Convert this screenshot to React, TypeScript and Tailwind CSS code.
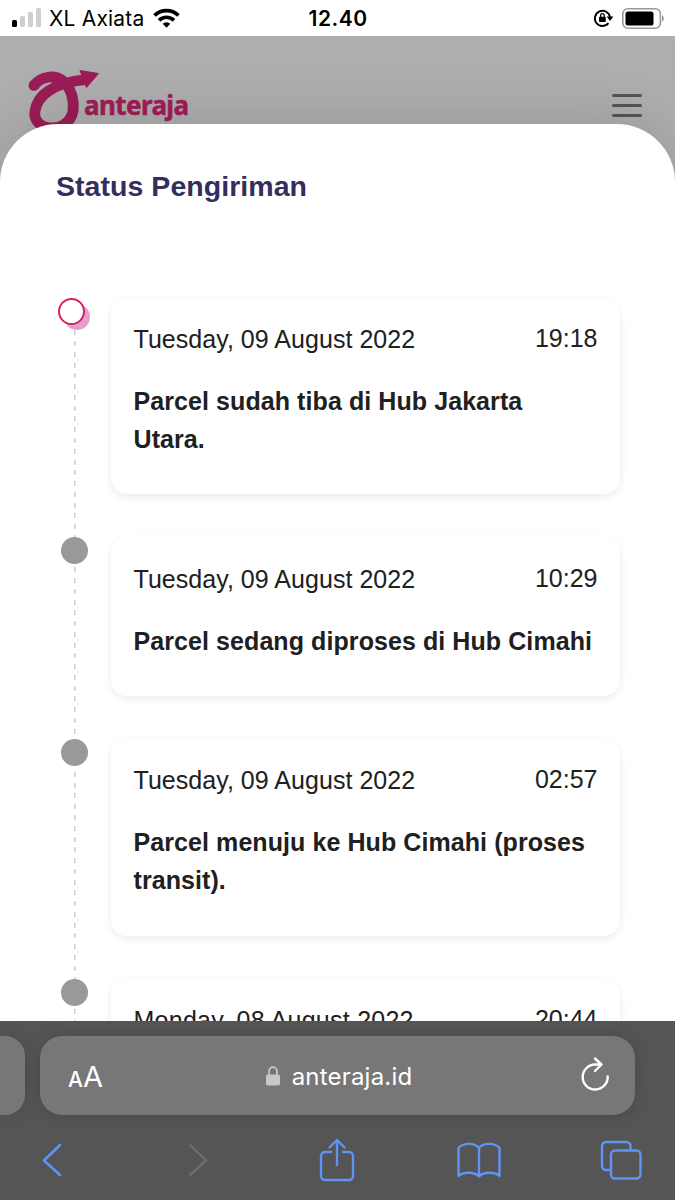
import type { ReactNode } from 'react';

type Status = {
    date: string;
    time: string;
    text: string;
    current?: boolean;
    dateClass?: string;
};

const history: Status[] = [
    {
        date: 'Tuesday, 09 August 2022',
        time: '19:18',
        text: 'Parcel sudah tiba di Hub Jakarta Utara.',
        current: true,
    },
    {
        date: 'Tuesday, 09 August 2022',
        time: '10:29',
        text: 'Parcel sedang diproses di Hub Cimahi',
    },
    {
        date: 'Tuesday, 09 August 2022',
        time: '02:57',
        text: 'Parcel menuju ke Hub Cimahi (proses transit).',
    },
    {
        date: 'Monday, 08 August 2022',
        time: '20:44',
        text: 'Parcel sudah diambil oleh SATRIA.',
        dateClass: 'tracking-[0.25px]',
    },
];

function StatusBar() {
    return (
        <div className="grid h-9 shrink-0 grid-cols-3 items-center bg-white pr-[10px] pl-[11px] font-['Inter','Liberation_Sans',sans-serif] text-black">
            <div className="flex items-center">
                <svg width="31" height="20" viewBox="0 0 31 20">
                    <rect x="1" y="12" width="5" height="7" rx="1.5" />
                    <g fill="#cfcfcf">
                        <rect x="9" y="8" width="5" height="11" rx="1.5" />
                        <rect x="17" y="4" width="5" height="15" rx="1.5" />
                        <rect x="25" y="0" width="5" height="19" rx="1.5" />
                    </g>
                </svg>
                <span className="mt-[2px] ml-[7px] text-[21px] leading-[34px] tracking-[0.2px] whitespace-nowrap">
                    XL Axiata
                </span>
                <svg
                    className="ml-2"
                    width="27"
                    height="20"
                    viewBox="0 0 28 20"
                    fill="none"
                    stroke="#000"
                    strokeWidth="3.8"
                >
                    <path d="M1.6 7.4a17.6 17.6 0 0 1 24.8 0" />
                    <path d="M6.2 12.4a11.2 11.2 0 0 1 15.6 0" />
                    <path d="M14 20l-4-4a5.8 5.8 0 0 1 8 0z" fill="#000" stroke="none" />
                </svg>
            </div>
            <span className="mt-[2px] text-center text-[21px] leading-[34px] font-semibold tracking-[0.5px]">
                12.40
            </span>
            <div className="flex items-center justify-end gap-2">
                <svg width="20" height="18" viewBox="0 0 20 18" fill="none">
                    <path
                        d="M14.4 14.2A7.6 7.6 0 1 1 16 8.2"
                        stroke="#000"
                        strokeWidth="1.9"
                    />
                    <path d="M12.6 7.6h6.8l-3.4 4.4z" fill="#000" />
                    <rect x="5" y="7.8" width="6.8" height="5.2" rx="0.8" fill="#000" />
                    <path d="M6.6 8.4V6.4a1.8 1.8 0 0 1 3.6 0v2" stroke="#000" strokeWidth="1.3" />
                </svg>
                <svg width="43" height="21" viewBox="0 0 43 21">
                    <rect
                        x="0.8"
                        y="0.8"
                        width="37.6"
                        height="19.4"
                        rx="5"
                        fill="none"
                        stroke="#999"
                        strokeWidth="1.6"
                    />
                    <rect x="3.5" y="3.5" width="28" height="14" rx="2.6" />
                    <path d="M40 7.2c2.4.9 2.4 5.7 0 6.6z" fill="#999" />
                </svg>
            </div>
        </div>
    );
}

function Logo() {
    return (
        <div className="flex">
            <svg width="72" height="66" viewBox="0 0 72 66" fill="none" stroke="#9b1c56">
                <path
                    d="M6 16.500C13 7 27 5.500 35 12C43 19 46.500 31 45 42C43 53 34 59 24 59C12 59 5.500 51 7 42C9 27 24 14 58 10.500"
                    strokeWidth="10.8"
                    strokeLinejoin="round"
                />
                <circle cx="6" cy="16.400" r="5.4" fill="#9b1c56" stroke="none" />
                <path d="M52 1.500l18.500 3L58.500 18.500z" fill="#9b1c56" strokeLinejoin="round" />
            </svg>
            <span className="mt-[21px] -ml-4 font-['Noto_Sans','Liberation_Sans',sans-serif] text-[26px] leading-[30px] font-bold tracking-[-0.6px] text-[#9f1d58] [-webkit-text-stroke:0.5px_#9f1d58]">
                anteraja
            </span>
        </div>
    );
}

function Dot({ current }: { current?: boolean }) {
    if (current) {
        return (
            <div className="mt-[6px] ml-[3px] size-[26px] rounded-full bg-[#e4a0c8]">
                <div className="relative -top-[6px] -left-[6px] size-[27px] rounded-full border-2 border-[#cf2468] bg-white" />
            </div>
        );
    }
    return <div className="size-[27px] rounded-full bg-[#999]" />;
}

function StatusCard({ date, time, text, dateClass }: Status) {
    return (
        <div className="w-[509px] rounded-2xl bg-white px-[22.500px] pt-[22.300px] pb-[36.500px] text-[25px] leading-[38px] text-[#202020] shadow-[0_3px_8px_rgba(0,0,0,0.08)]">
            <div className="flex justify-between">
                <span className={dateClass ?? 'tracking-[0.04px]'}>{date}</span>
                <span className="-mt-[1px] -mb-[1px]">{time}</span>
            </div>
            <p className="mt-6 font-bold tracking-[0.08px]">{text}</p>
        </div>
    );
}

function ToolbarButton({ children }: { children: ReactNode }) {
    return <button className="flex h-[46px] w-[46px] items-center justify-center">{children}</button>;
}

function BrowserBar() {
    return (
        <footer className="relative h-[179px] shrink-0 overflow-hidden bg-[#555] pt-[15px]">
            <div className="flex h-[79px] gap-[15px] text-white">
                <div className="w-[25px] rounded-r-[20px] bg-[#777] shadow-[0_0_16px_rgba(0,0,0,0.15)]" />
                <div className="flex w-[595px] items-center justify-between rounded-[22px] bg-[#777] pr-[25px] pl-[28px] font-['Inter','Liberation_Sans',sans-serif] shadow-[0_0_16px_rgba(0,0,0,0.15)]">
                    <div className="mt-[1px] flex w-10 items-baseline leading-none">
                        <span className="text-[21px] font-medium">A</span>
                        <span className="text-[29px]">A</span>
                    </div>
                    <div className="mr-[10px] flex items-center gap-3">
                        <svg width="14" height="20" viewBox="0 0 14 20" fill="none">
                            <rect y="8.500" width="14" height="11" rx="1.8" fill="#c8c8ca" />
                            <path d="M3 9V5.200a4 4 0 0 1 8 0V9" stroke="#c8c8ca" strokeWidth="1.7" />
                        </svg>
                        <span className="mt-[2px] text-[24px] tracking-[0.2px]">anteraja.id</span>
                    </div>
                    <svg
                        className="-mt-[3px]"
                        width="30"
                        height="34"
                        viewBox="0 0 30 34"
                        fill="none"
                        stroke="#fff"
                        strokeWidth="2.4"
                        strokeLinecap="round"
                        strokeLinejoin="round"
                    >
                        <path d="M27.700 19.500A12.500 12.500 0 1 1 15.200 7.500H21" />
                        <path d="M15 1.500l6.500 6-6.500 6.500" />
                    </svg>
                </div>
            </div>
            <nav className="mt-[22px] flex justify-between pr-[31px] pl-[29px] text-[#5f93f5]">
                <ToolbarButton>
                    <svg width="20" height="34" viewBox="0 0 20 34" fill="none" stroke="currentColor" strokeWidth="2.6" strokeLinecap="round" strokeLinejoin="round">
                        <path d="M18 2L2 17.500 18 32" />
                    </svg>
                </ToolbarButton>
                <ToolbarButton>
                    <svg className="ml-[8px]" width="20" height="34" viewBox="0 0 20 34" fill="none" stroke="#6e6e6e" strokeWidth="2.4" strokeLinecap="round" strokeLinejoin="round">
                        <path d="M2 2l16 15.500L2 32" />
                    </svg>
                </ToolbarButton>
                <ToolbarButton>
                    <svg width="36" height="44" viewBox="0 0 36 44" fill="none" stroke="currentColor" strokeWidth="2.4" strokeLinecap="round" strokeLinejoin="round">
                        <path d="M12 14H6a4 4 0 0 0-4 4v20a4 4 0 0 0 4 4h24a4 4 0 0 0 4-4V18a4 4 0 0 0-4-4h-6" />
                        <path d="M18 27V2M10.500 9.500L18 2l7.500 7.500" />
                    </svg>
                </ToolbarButton>
                <ToolbarButton>
                    <svg width="44" height="36" viewBox="0 0 44 36" fill="none" stroke="currentColor" strokeWidth="2.4" strokeLinejoin="round">
                        <path d="M22 6C18 .5 6 .5 1.500 6v28C6 29.500 18 29.500 22 34.500 26 29.500 38 29.500 42.500 34V6C38 .5 26 .5 22 6zM22 6v28" />
                    </svg>
                </ToolbarButton>
                <ToolbarButton>
                    <svg width="42" height="40" viewBox="0 0 42 40" fill="none" stroke="currentColor" strokeWidth="2.4">
                        <rect x="11" y="10.500" width="29.500" height="28" rx="4" />
                        <path d="M11 30H6a4 4 0 0 1-4-4V6a4 4 0 0 1 4-4h20.500a4 4 0 0 1 4 4v4.500" />
                    </svg>
                </ToolbarButton>
            </nav>
        </footer>
    );
}

export default function App() {
    return (
        <div className="flex h-[1200px] w-[675px] flex-col overflow-hidden bg-white font-['Liberation_Sans',Arial,sans-serif]">
            <StatusBar />
            <div className="flex min-h-0 grow flex-col overflow-hidden bg-[#aeaeae]">
                <header className="flex h-[88px] shrink-0 items-start justify-between pt-[33px] pr-[33px] pl-[28px]">
                    <Logo />
                    <div className="mt-[25px] flex flex-col gap-[7px]">
                        <div className="h-[3px] w-[30px] rounded-full bg-[#555]" />
                        <div className="h-[3px] w-[30px] rounded-full bg-[#555]" />
                        <div className="h-[3px] w-[30px] rounded-full bg-[#555]" />
                    </div>
                </header>
                <main className="relative min-h-0 grow rounded-t-[58px] bg-white pt-[43px] shadow-[0_0_60px_rgba(0,0,0,0.15)]">
                    <h1 className="pl-[56px] text-[28.500px] leading-[38px] font-bold tracking-[0.05px] text-[#342e5c]">
                        Status Pengiriman
                    </h1>
                    <div className="mt-[92.500px] flex flex-col gap-[43px] bg-[repeating-linear-gradient(#ccc_0px,#ccc_5px,transparent_5px,transparent_10.77px)] bg-[length:1.500px_100%] bg-[position:74px_0] bg-no-repeat">
                        {history.map((item) => (
                            <div key={item.time} className="flex">
                                <div className="w-[111px] pl-[61px]">
                                    <Dot current={item.current} />
                                </div>
                                <StatusCard {...item} />
                            </div>
                        ))}
                    </div>
                </main>
            </div>
            <BrowserBar />
        </div>
    );
}
